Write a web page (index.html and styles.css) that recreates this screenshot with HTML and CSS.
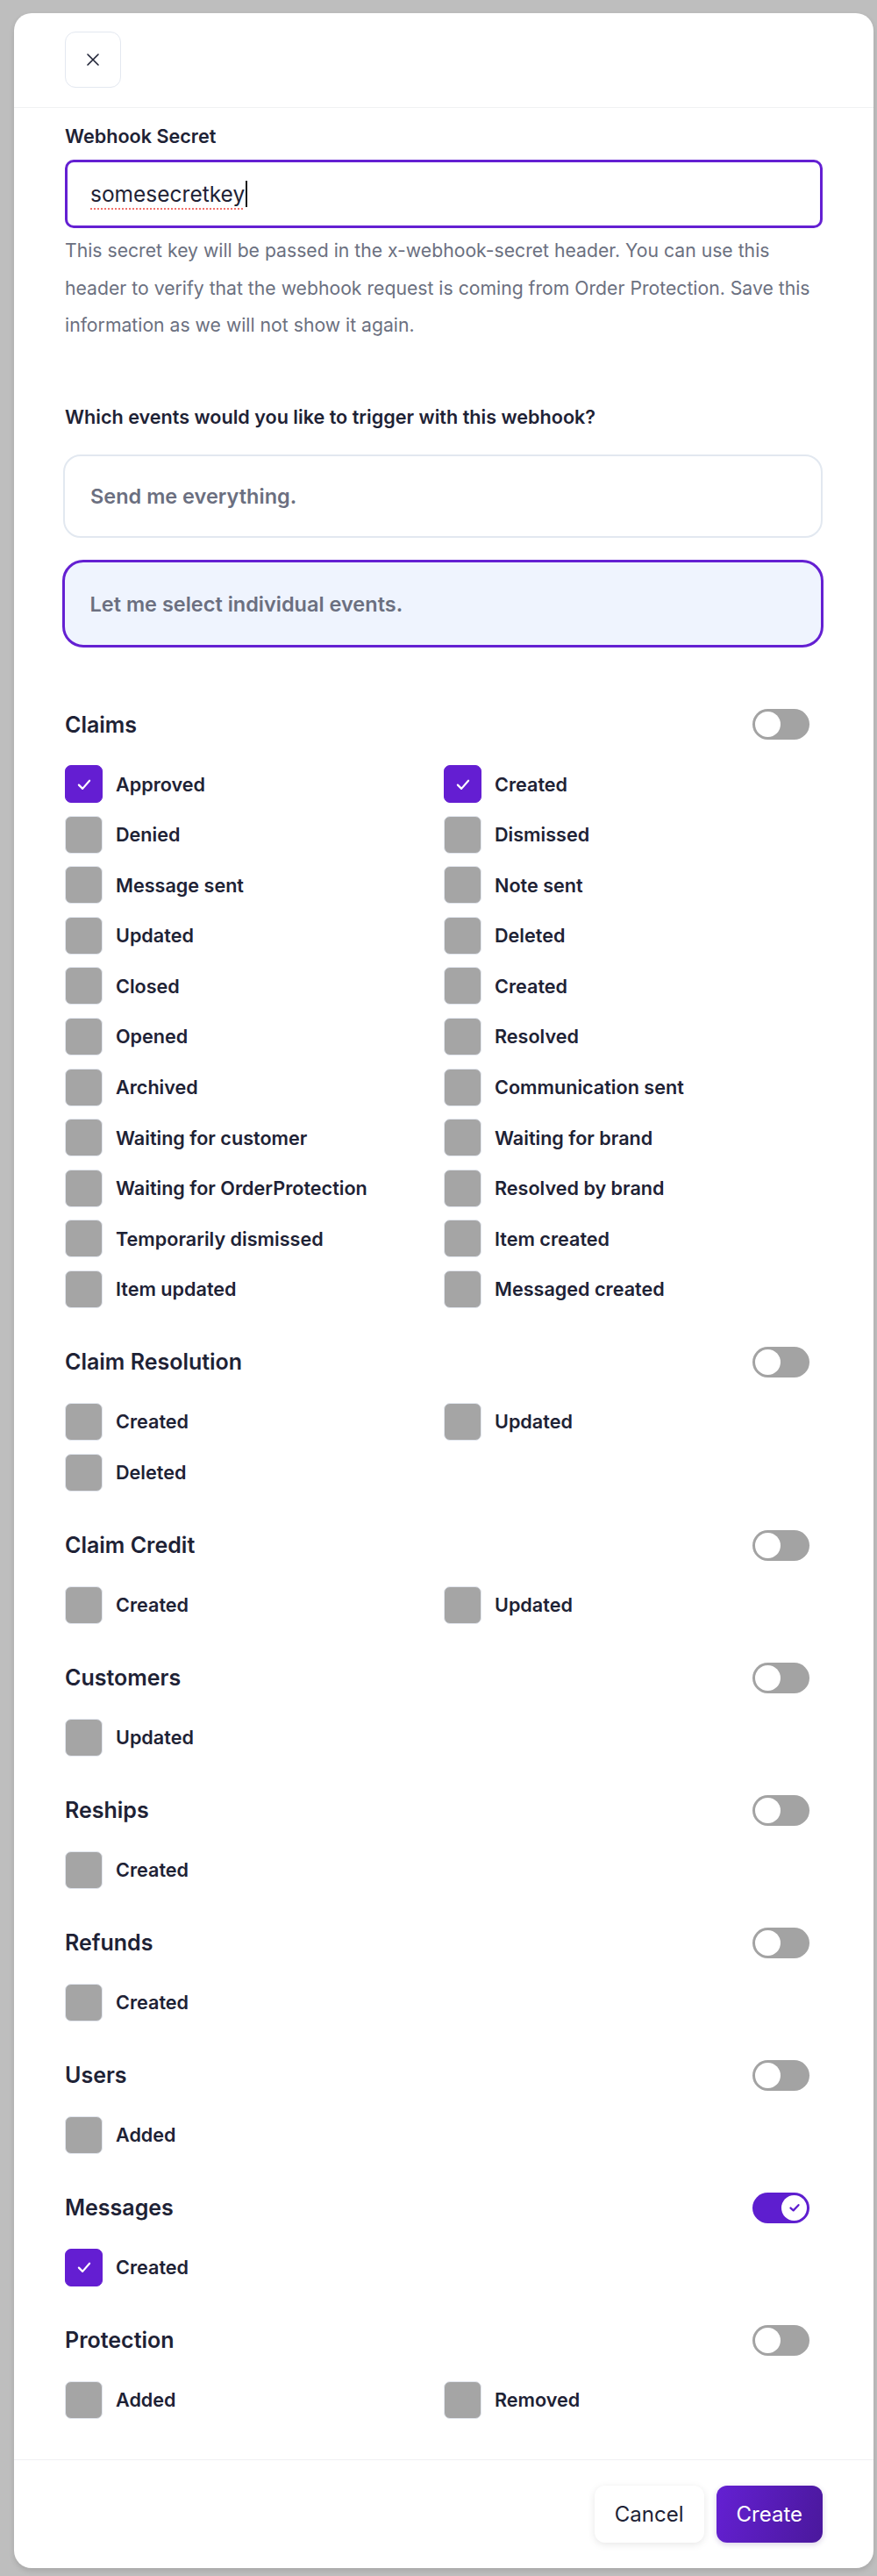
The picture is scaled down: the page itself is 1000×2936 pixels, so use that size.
FILE: index.html
```html
<!DOCTYPE html>
<html lang="en">
<head>
<meta charset="utf-8">
<title>Create webhook</title>
<link rel="stylesheet" href="styles.css">
</head>
<body>
<div class="modal">
  <div class="modal-header">
    <button class="close-btn" aria-label="Close">
      <svg width="14" height="14" viewBox="0 0 14 14"><path d="M1 1L13 13M13 1L1 13" stroke="#1e2235" stroke-width="1.6" stroke-linecap="round"/></svg>
    </button>
  </div>
  <div class="modal-body">
    <div class="field-label">Webhook Secret</div>
    <div class="text-input"><span class="typed">somesecretkey</span><span class="caret"></span></div>
    <p class="help">This secret key will be passed in the x-webhook-secret header. You can use this header to verify that the webhook request is coming from Order Protection. Save this information as we will not show it again.</p>

    <div class="question">Which events would you like to trigger with this webhook?</div>
    <div class="option">Send me everything.</div>
    <div class="option option-selected">Let me select individual events.</div>

    <div class="sections">
      <section class="group">
        <div class="group-head"><h3>Claims</h3><span class="toggle"><span class="knob"></span></span></div>
        <div class="items">
          <label class="item"><span class="box checked"><svg viewBox="0 0 18 18"><path d="M4 9.5L7.5 13L14 5.5"/></svg></span>Approved</label>
          <label class="item"><span class="box checked"><svg viewBox="0 0 18 18"><path d="M4 9.5L7.5 13L14 5.5"/></svg></span>Created</label>
          <label class="item"><span class="box"></span>Denied</label>
          <label class="item"><span class="box"></span>Dismissed</label>
          <label class="item"><span class="box"></span>Message sent</label>
          <label class="item"><span class="box"></span>Note sent</label>
          <label class="item"><span class="box"></span>Updated</label>
          <label class="item"><span class="box"></span>Deleted</label>
          <label class="item"><span class="box"></span>Closed</label>
          <label class="item"><span class="box"></span>Created</label>
          <label class="item"><span class="box"></span>Opened</label>
          <label class="item"><span class="box"></span>Resolved</label>
          <label class="item"><span class="box"></span>Archived</label>
          <label class="item"><span class="box"></span>Communication sent</label>
          <label class="item"><span class="box"></span>Waiting for customer</label>
          <label class="item"><span class="box"></span>Waiting for brand</label>
          <label class="item"><span class="box"></span>Waiting for OrderProtection</label>
          <label class="item"><span class="box"></span>Resolved by brand</label>
          <label class="item"><span class="box"></span>Temporarily dismissed</label>
          <label class="item"><span class="box"></span>Item created</label>
          <label class="item"><span class="box"></span>Item updated</label>
          <label class="item"><span class="box"></span>Messaged created</label>
        </div>
      </section>

      <section class="group">
        <div class="group-head"><h3>Claim Resolution</h3><span class="toggle"><span class="knob"></span></span></div>
        <div class="items">
          <label class="item"><span class="box"></span>Created</label>
          <label class="item"><span class="box"></span>Updated</label>
          <label class="item"><span class="box"></span>Deleted</label>
        </div>
      </section>

      <section class="group">
        <div class="group-head"><h3>Claim Credit</h3><span class="toggle"><span class="knob"></span></span></div>
        <div class="items">
          <label class="item"><span class="box"></span>Created</label>
          <label class="item"><span class="box"></span>Updated</label>
        </div>
      </section>

      <section class="group">
        <div class="group-head"><h3>Customers</h3><span class="toggle"><span class="knob"></span></span></div>
        <div class="items">
          <label class="item"><span class="box"></span>Updated</label>
        </div>
      </section>

      <section class="group">
        <div class="group-head"><h3>Reships</h3><span class="toggle"><span class="knob"></span></span></div>
        <div class="items">
          <label class="item"><span class="box"></span>Created</label>
        </div>
      </section>

      <section class="group">
        <div class="group-head"><h3>Refunds</h3><span class="toggle"><span class="knob"></span></span></div>
        <div class="items">
          <label class="item"><span class="box"></span>Created</label>
        </div>
      </section>

      <section class="group">
        <div class="group-head"><h3>Users</h3><span class="toggle"><span class="knob"></span></span></div>
        <div class="items">
          <label class="item"><span class="box"></span>Added</label>
        </div>
      </section>

      <section class="group">
        <div class="group-head"><h3>Messages</h3><span class="toggle toggle-on"><span class="knob"><svg viewBox="0 0 16 16"><path d="M4 8.5L6.8 11L12 5.5"/></svg></span></span></div>
        <div class="items">
          <label class="item"><span class="box checked"><svg viewBox="0 0 18 18"><path d="M4 9.5L7.5 13L14 5.5"/></svg></span>Created</label>
        </div>
      </section>

      <section class="group">
        <div class="group-head"><h3>Protection</h3><span class="toggle"><span class="knob"></span></span></div>
        <div class="items">
          <label class="item"><span class="box"></span>Added</label>
          <label class="item"><span class="box"></span>Removed</label>
        </div>
      </section>
    </div>
  </div>
  <div class="modal-footer">
    <button class="btn btn-cancel">Cancel</button>
    <button class="btn btn-create">Create</button>
  </div>
</div>
</body>
</html>
```
FILE: styles.css
```css
* { box-sizing: border-box; }

html, body {
  margin: 0;
  padding: 0;
}

body {
  background: #bebebe;
  padding: 15px 0 9px 16px;
  font-family: Inter, "Noto Sans", sans-serif;
  color: #1e2235;
}

.modal {
  width: 980px;
  background: #ffffff;
  border-radius: 20px;
  box-shadow: 0 3px 6px rgba(0, 0, 0, 0.12);
}

.modal-header {
  padding: 21px 58px 22px;
  border-bottom: 1px solid #f0f1f3;
}

.close-btn {
  width: 64px;
  height: 64px;
  display: flex;
  align-items: center;
  justify-content: center;
  background: #fff;
  border: 1px solid #e3e8f0;
  border-radius: 12px;
  padding: 0;
}

.modal-body {
  padding: 16px 58px 46px;
}

.field-label {
  font-size: 21.6px;
  line-height: 32px;
  font-weight: 600;
  color: #1e2235;
}

.text-input {
  margin-top: 11px;
  height: 78px;
  border: 3px solid #6420d2;
  border-radius: 10px;
  padding: 0 26px;
  display: flex;
  align-items: center;
  font-size: 24.5px;
  color: #1e2235;
}

.typed {
  text-decoration: underline dotted #f3726c;
  text-decoration-thickness: 2px;
  text-underline-offset: 7px;
}

.caret {
  display: inline-block;
  width: 2px;
  height: 30px;
  background: #111;
  margin-left: 1px;
}

.help {
  margin: 4px 0 0;
  font-size: 21.2px;
  line-height: 42.67px;
  color: #6b7080;
}

.question {
  margin-top: 68px;
  font-size: 21.6px;
  line-height: 30px;
  font-weight: 600;
  color: #1e2235;
}

.option {
  margin: 28px 0 0 -2px;
  height: 95px;
  border: 2px solid #e2e8f0;
  border-radius: 20px;
  display: flex;
  align-items: center;
  padding-left: 29px;
  font-size: 23.5px;
  font-weight: 600;
  color: #6b6f80;
}

.option-selected {
  margin: 25px -1px 0 -3px;
  height: 100px;
  border: 3.5px solid #6420d2;
  border-radius: 24px;
  background: #eff4fe;
  padding-left: 28.5px;
}

.sections {
  margin-top: 70px;
  display: flex;
  flex-direction: column;
  gap: 44px;
}

.group-head {
  height: 35px;
  display: flex;
  align-items: center;
  justify-content: space-between;
  padding-right: 15px;
}

.group-head h3 {
  margin: 0;
  font-size: 25px;
  font-weight: 600;
  color: #1e2235;
}

.toggle {
  width: 65px;
  height: 35px;
  border-radius: 18px;
  background: #a3a3a3;
  padding: 3px;
  display: flex;
  align-items: center;
}

.knob {
  width: 29px;
  height: 29px;
  border-radius: 50%;
  background: #fff;
  display: flex;
  align-items: center;
  justify-content: center;
}

.toggle-on {
  background: #5e1ecf;
  justify-content: flex-end;
}

.knob svg {
  width: 18px;
  height: 18px;
  fill: none;
  stroke: #5e1ecf;
  stroke-width: 2;
  stroke-linecap: round;
  stroke-linejoin: round;
}

.items {
  margin-top: 29px;
  display: grid;
  grid-template-columns: 1fr 1fr;
  row-gap: 14.6px;
}

.item {
  display: flex;
  align-items: center;
  gap: 15px;
  font-size: 21.6px;
  font-weight: 600;
  color: #1e2235;
}

.box {
  width: 43px;
  height: 43px;
  flex: none;
  border-radius: 7px;
  background: #a5a5a5;
  border: 1.5px solid #e2e6ee;
  display: flex;
  align-items: center;
  justify-content: center;
}

.box.checked {
  background: #641ed2;
  border-color: #641ed2;
}

.box svg {
  width: 22px;
  height: 22px;
  fill: none;
  stroke: #ffffff;
  stroke-width: 1.8;
  stroke-linecap: round;
  stroke-linejoin: round;
}

.modal-footer {
  border-top: 1px solid #f0f1f3;
  padding: 29px 58px;
  display: flex;
  justify-content: flex-end;
  gap: 14px;
}

.btn {
  height: 65px;
  border-radius: 12px;
  border: none;
  font-family: Inter, "Noto Sans", sans-serif;
  font-size: 24px;
  font-weight: 400;
  padding: 0 23px;
}

.btn-cancel {
  background: #fff;
  color: #1e2235;
  box-shadow: 0 2px 8px rgba(0, 0, 0, 0.1);
}

.btn-create {
  background: linear-gradient(105deg, #6420d3 0%, #4a189c 100%);
  color: #fff;
  box-shadow: 0 2px 6px rgba(60, 20, 130, 0.2);
}
```
